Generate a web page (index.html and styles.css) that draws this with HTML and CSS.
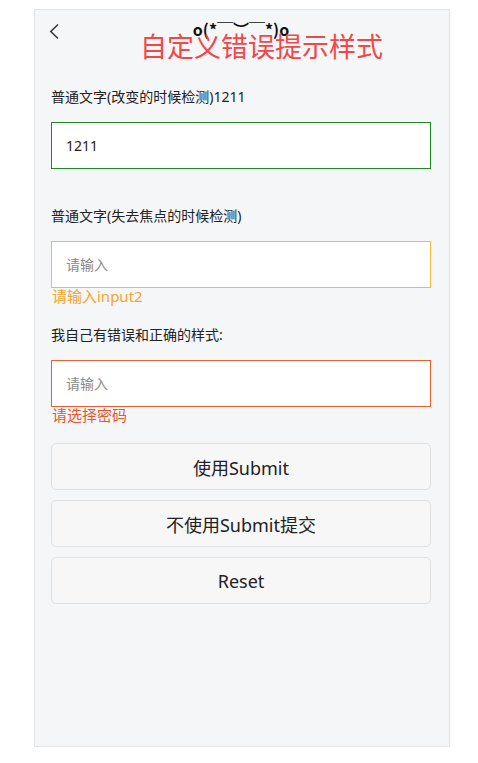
FILE: index.html
```html
<!DOCTYPE html>
<html lang="zh-CN">
<head>
  <meta charset="UTF-8" />
  <title>自定义错误提示样式</title>
  <link rel="stylesheet" href="styles.css">
</head>
<body>

  <div class="phone">
    <div class="nav">
      <a class="back" href="#">
        <svg width="12" height="18" viewBox="0 0 12 18">
          <path d="M9 1.5 L1.8 8.5 L9 15.5" fill="none" stroke="#333" stroke-width="1.5" />
        </svg>
      </a>
      <span class="nav-title">o(*￣︶￣*)o</span>
      <span></span>
    </div>

    <h1 class="page-title">自定义错误提示样式</h1>

    <form class="form">
      <div class="field">
        <label>普通文字(改变的时候检测)1211</label>
        <input type="text" class="input ok" value="1211" />
        <div class="error"></div>
      </div>

      <div class="field">
        <label>普通文字(失去焦点的时候检测)</label>
        <input type="text" class="input warn" placeholder="请输入" />
        <div class="error warn-text">请输入input2</div>
      </div>

      <div class="field">
        <label>我自己有错误和正确的样式:</label>
        <input type="password" class="input bad" placeholder="请输入" />
        <div class="error bad-text">请选择密码</div>
      </div>

      <div class="buttons">
        <button type="button">使用Submit</button>
        <button type="button">不使用Submit提交</button>
        <button type="reset">Reset</button>
      </div>
    </form>
  </div>

</body>
</html>
```

FILE: styles.css
```css
* {
  box-sizing: border-box;
}

body {
  margin: 0;
  background: #fff;
  font-family: "Noto Sans", "Noto Sans CJK SC", sans-serif;
  color: #222;
}

.phone {
  margin: 9px 0 0 34px;
  width: 416px;
  height: 738px;
  background: #f5f6f8;
  border: 1px solid #e3e4e6;
  box-shadow: 0 1px 3px rgba(0,0,0,0.04);
  padding: 0 18px 0 16px;
}

.nav {
  display: grid;
  grid-template-columns: 1fr auto 1fr;
  align-items: center;
  height: 38px;
  margin: 0 -18px 0 -16px;
  padding: 4px 16px 0 14px;
}

.back {
  display: flex;
  align-items: center;
  padding-top: 2px;
}

.nav-title {
  font-family: "Noto Sans CJK SC", sans-serif;
  font-size: 16px;
  font-weight: bold;
  color: #111;
  line-height: 20px;
  margin-top: -4px;
}

.page-title {
  margin: -18px 0 0 0;
  padding-left: 89px;
  font-family: "Noto Sans CJK SC", sans-serif;
  font-size: 27px;
  font-weight: normal;
  line-height: 32px;
  color: #f04848;
}

.form {
  margin-top: 25px;
}

.field {
  margin-bottom: 21px;
}

.field label {
  display: block;
  font-size: 14px;
  line-height: 20px;
  margin-bottom: 15px;
}

.input {
  display: block;
  width: 380px;
  height: 47px;
  padding: 0 14px;
  font-family: "Noto Sans", "Noto Sans CJK SC", sans-serif;
  font-size: 14px;
  color: #222;
  background: #fff;
  border: 1px solid #ddd;
  outline: none;
}

.input::placeholder {
  color: #8a8a8a;
}

.input.ok {
  border-color: #1f8a23;
}

.input.warn {
  border-color: #f4bc3a;
}

.input.bad {
  border-color: #e5622e;
}

.error {
  min-height: 16px;
  font-size: 15px;
  line-height: 16px;
  padding-left: 1px;
}

.warn-text {
  color: #f5a52a;
}

.bad-text {
  color: #e5572a;
}

.buttons {
  display: flex;
  flex-direction: column;
  gap: 10px;
  margin-top: -1px;
}

button {
  width: 380px;
  height: 47px;
  font-family: "Noto Sans", "Noto Sans CJK SC", sans-serif;
  font-size: 18px;
  color: #222;
  background: #f7f7f7;
  border: 1px solid #e0e0e0;
  border-radius: 5px;
  cursor: pointer;
}
```
